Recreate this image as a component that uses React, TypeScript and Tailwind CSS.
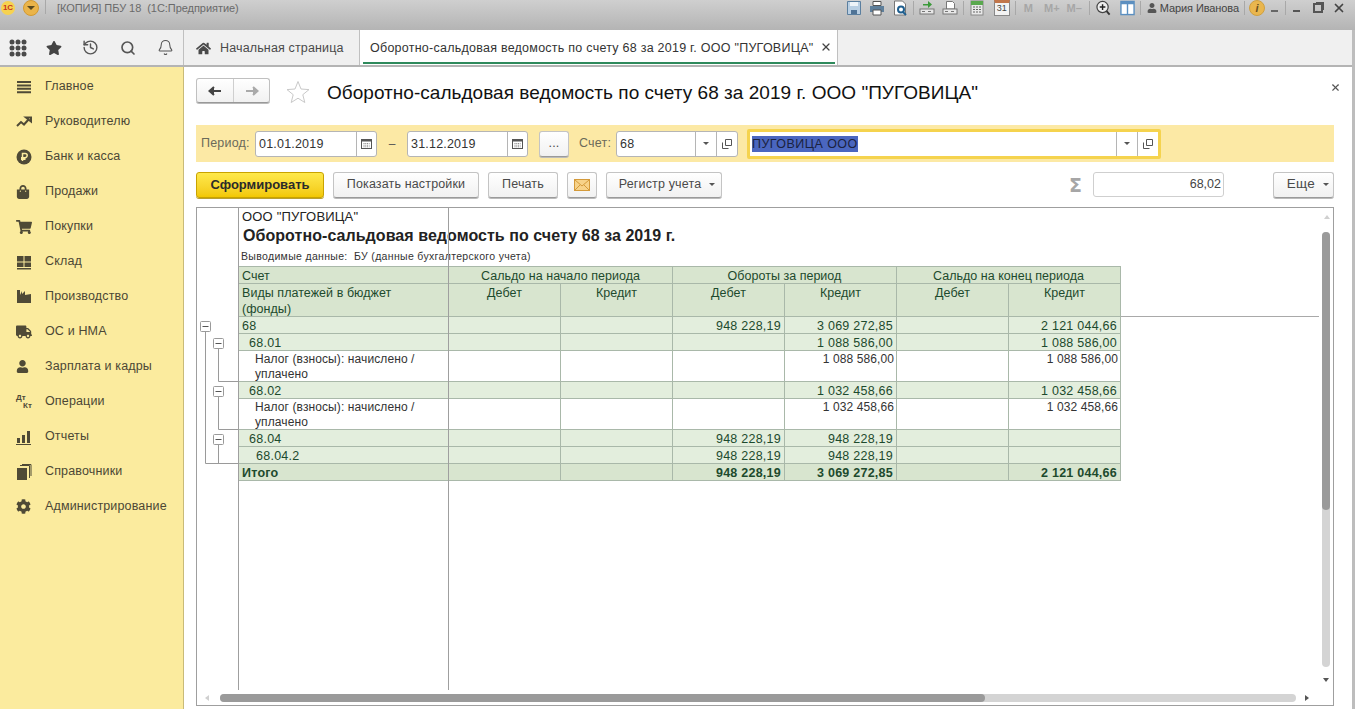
import React from "react";
import { FaStar, FaHome, FaShoppingCart, FaTruck, FaUser, FaCog, FaShoppingBag } from "react-icons/fa";
import { History, Search, Bell, X } from "lucide-react";

const Sv = ({ children, w = 16, h = 16, vb = "0 0 16 16" }: { children: React.ReactNode; w?: number; h?: number; vb?: string }) => (
  <svg width={w} height={h} viewBox={vb} className="shrink-0">{children}</svg>
);

const Dots = () => (
  <Sv w={18} h={18} vb="0 0 18 18">
    {[3, 9, 15].flatMap((y) => [3, 9, 15].map((x) => <circle key={`${x}-${y}`} cx={x} cy={y} r="2.5" fill="#4a4a4a" />))}
  </Sv>
);

const CopyIcon = () => (
  <Sv w={10} h={10} vb="0 0 10 10">
    <path d="M3.5 .5h6v6h-6z M.5 3.5v6h6" fill="none" stroke="#555" strokeWidth="1" />
  </Sv>
);
const Caret = () => <span className="block w-0 h-0 border-x-[3px] border-x-transparent border-t-[3px] border-t-[#555]" />;
const Cal = () => (
  <Sv w={11} h={11} vb="0 0 11 11">
    <rect x=".5" y="1.5" width="10" height="9" fill="#fff" stroke="#555" />
    <rect x="1" y="1" width="9" height="2.5" fill="#555" />
    <path d="M2.5 5.5h6M2.5 7.2h6M2.5 8.8h6" stroke="#777" strokeWidth=".9" strokeDasharray="1 .8" />
  </Sv>
);

const navIcons: React.ReactNode[] = [
  <Sv><path d="M1 3h14M1 6.4h14M1 9.8h14M1 13.2h14" stroke="#4f4a36" strokeWidth="2" /></Sv>,
  <Sv><path d="M1 12l4-4 3 2.5 5-5.5M10 3.5h5v4z" fill="none" stroke="#4f4a36" strokeWidth="2" /></Sv>,
  <Sv><circle cx="8" cy="8" r="7.5" fill="#4f4a36" /><path d="M6.5 12V4.500h2.600a2 2 0 010 4.200H5M5 10.300h4.500" fill="none" stroke="#fbeb9e" strokeWidth="1.500" /></Sv>,
  <FaShoppingBag size={14} color="#4f4a36" />,
  <FaShoppingCart size={16} color="#4f4a36" />,
  <Sv><path d="M1 2h6.500v5.500H1zM8.500 2H15v5.500H8.500zM1 8.500h6.500V13H1zM8.500 8.500H15V13H8.500zM1 14h14v1.500H1z" fill="#4f4a36" /></Sv>,
  <Sv><path d="M1 14V1h3v5l2-4v3l3-3v4l6-1v9z" fill="#4f4a36" /></Sv>,
  <FaTruck size={16} color="#4f4a36" />,
  <FaUser size={13} color="#4f4a36" />,
  <span className="relative block w-[16px] h-[16px] text-[#4f4a36] text-[8px] leading-[8px] font-bold"><span className="block">Дт</span><span className="block pl-[7px]">Кт</span></span>,
  <Sv><path d="M1 9h3v5H1zM6 6h3v8H6zM11 2h3v12h-3zM0 15h15v1H0z" fill="#4f4a36" /></Sv>,
  <Sv><path d="M1 4h10v12H1z" fill="#4f4a36" /><path d="M4 1.500h9.500V14M6 .5h9V12" fill="none" stroke="#4f4a36" /></Sv>,
  <FaCog size={15} color="#4f4a36" />,
];
const navLabels = ["Главное", "Руководителю", "Банк и касса", "Продажи", "Покупки", "Склад", "Производство", "ОС и НМА", "Зарплата и кадры", "Операции", "Отчеты", "Справочники", "Администрирование"];

const Btn = ({ className, children }: { className: string; children: React.ReactNode }) => (
  <div className={`h-[26px] flex items-center justify-center rounded-[3px] border border-[#c4c4c4] border-b-[#9a9a9a] bg-gradient-to-b from-white to-[#f1f1f1] text-[12.5px] text-[#4a4a4a] shadow-[0_1px_0_#bbb] tracking-[0.15px] ${className}`}>{children}</div>
);

const Field = ({ text, w, btns }: { text: string; w: string; btns: React.ReactNode }) => (
  <div className={`h-[26px] flex items-stretch rounded-[3px] border border-[#b5b5b5] bg-white ${w}`}>
    <span className="flex-1 pl-[3px] text-[12.5px] leading-[24px] text-[#333] tracking-[0.2px]">{text}</span>
    {btns}
  </div>
);
const CalBtn = () => (
  <span className="w-[20px] border-l border-[#b5b5b5] flex items-center justify-center"><Cal /></span>
);
const SelBtns = () => (
  <>
    <span className="w-[21px] border-l border-[#b5b5b5] flex items-center justify-center"><Caret /></span>
    <span className="w-[21px] border-l border-[#b5b5b5] flex items-center justify-center"><CopyIcon /></span>
  </>
);

type Row = { h: string; bg: string; name: string; pad: string; v: string[]; small?: boolean; bold?: boolean };
const green = "bg-[#e3eedd]";
const rows: Row[] = [
  { h: "h-[17px]", bg: green, name: "68", pad: "pl-[3px]", v: ["", "", "948 228,19", "3 069 272,85", "", "2 121 044,66"] },
  { h: "h-[17px]", bg: green, name: "68.01", pad: "pl-[10px]", v: ["", "", "", "1 088 586,00", "", "1 088 586,00"] },
  { h: "h-[31px]", bg: "bg-white", name: "Налог (взносы): начислено / уплачено", pad: "pl-[16px]", small: true, v: ["", "", "", "1 088 586,00", "", "1 088 586,00"] },
  { h: "h-[17px]", bg: green, name: "68.02", pad: "pl-[10px]", v: ["", "", "", "1 032 458,66", "", "1 032 458,66"] },
  { h: "h-[31px]", bg: "bg-white", name: "Налог (взносы): начислено / уплачено", pad: "pl-[16px]", small: true, v: ["", "", "", "1 032 458,66", "", "1 032 458,66"] },
  { h: "h-[17px]", bg: green, name: "68.04", pad: "pl-[10px]", v: ["", "", "948 228,19", "948 228,19", "", ""] },
  { h: "h-[17px]", bg: green, name: "68.04.2", pad: "pl-[17px]", v: ["", "", "948 228,19", "948 228,19", "", ""] },
  { h: "h-[17px]", bg: "bg-[#d8e5cf]", name: "Итого", pad: "pl-[3px]", bold: true, v: ["", "", "948 228,19", "3 069 272,85", "", "2 121 044,66"] },
];

const cell = "border border-[#a9b8a9] p-0 align-top overflow-hidden";
const Nudge = ({ children }: { children: React.ReactNode }) => <span className="relative top-[1px] block">{children}</span>;

const TreeBox = ({ x, y }: { x: number; y: number }) => (
  <g>
    <rect x={x} y={y} width="10" height="10" rx="1" fill="#fff" stroke="#9a9a9a" />
    <path d={`M${x + 2} ${y + 5}h6`} stroke="#555" />
  </g>
);

const Sep = ({ c }: { c: string }) => <div className={`w-px h-[14px] bg-[#a8a8a8] ${c}`} />;

export default function App() {
  return (
    <div className="w-[1355px] h-[709px] overflow-hidden flex flex-col bg-[#bdbdbd] text-[#333]" style={{ fontFamily: '"Liberation Sans", Arial, sans-serif' }}>
      {/* title bar */}
      <div className="h-[30px] shrink-0 flex items-start bg-gradient-to-b from-[#cfcfcf] to-[#b4b4b4]">
        <div className="w-[14px] h-[14px] ml-[1px] mt-[1px] rounded-full bg-[#f6d250] flex items-center justify-center text-[8px] font-bold text-[#c8321e]">1С</div>
        <div className="w-[16px] h-[16px] ml-[8px] rounded-full bg-[#eab44a] border border-[#d39a30] flex items-center justify-center">
          <span className="block w-0 h-0 border-x-[4px] border-x-transparent border-t-[4px] border-t-[#5a4a20]" />
        </div>
        <div className="w-px h-[14px] ml-[6px] bg-[#a8a8a8]" />
        <div className="ml-[11px] h-[16px] text-[11px] leading-[16px] tracking-[-0.05px] text-[#6a6a6a] whitespace-nowrap">[КОПИЯ] ПБУ 18&nbsp; (1С:Предприятие)</div>
        <div className="ml-auto mr-[9px] flex items-center h-[16px]">
          <div className="flex items-center gap-[7px]">
            <Sv><path d="M1.500 1.500h13v13h-13z" fill="#b9cfe3" stroke="#5b7f9f" /><path d="M4 2h8v4H4z" fill="#eef4f9" /><path d="M5 10h6v4H5z" fill="#4f7396" /></Sv>
            <Sv><path d="M4 1.500h8v4H4z" fill="#fff" stroke="#555" /><path d="M1 6h14v6H1z" fill="#5e7f9b" /><path d="M4 10h8v5H4z" fill="#fff" stroke="#555" /></Sv>
            <Sv><path d="M2.500 1h8l3 3v11h-11z" fill="#fff" stroke="#777" /><circle cx="9" cy="9.500" r="3" fill="none" stroke="#1f5f8f" strokeWidth="2" /><path d="M11 12l3 3" stroke="#1f5f8f" strokeWidth="2" /></Sv>
          </div>
          <Sep c="mx-[5px]" />
          <div className="flex items-center gap-[7px]">
            <Sv><path d="M4 4h5V1l4 3.500L9 8V5.500H4z" fill="#3b9a3a" /><rect x="1" y="9" width="14" height="5" fill="#e8e8e8" stroke="#777" /><path d="M3 11.500h3M9 11.500h3" stroke="#777" /></Sv>
            <Sv><path d="M4.500 1.500h6l2 2V9h-8z" fill="#fff" stroke="#777" /><rect x="1" y="9" width="14" height="5" fill="#e8e8e8" stroke="#777" /><path d="M3 11.500h3M9 11.500h3" stroke="#777" /></Sv>
          </div>
          <Sep c="mx-[5px]" />
          <div className="flex items-center gap-[9px]">
            <Sv><rect x="2" y="1" width="12" height="14" fill="#e9e9e9" stroke="#888" /><rect x="2" y="1" width="12" height="4" fill="#5aa84f" /><path d="M4 7h2M7 7h2M10 7h2M4 9.500h2M7 9.500h2M10 9.500h2M4 12h2M7 12h2M10 12h2" stroke="#666" strokeWidth="1.200" /></Sv>
            <div className="w-[16px] h-[16px] border border-[#888] bg-[#f3f3f3] border-t-[3px] border-t-[#c2764a] text-[9px] leading-[11px] text-center text-[#444]">31</div>
          </div>
          <Sep c="mx-[5px]" />
          <div className="flex items-center text-[11px] font-bold text-[#a6a6a6]">
            <span className="ml-[3px]">M</span><span className="ml-[11px]">M+</span><span className="ml-[7px]">M–</span>
          </div>
          <Sep c="ml-[7px] mr-[6px]" />
          <Sv w={15} h={16}>
            <circle cx="7" cy="7" r="6" fill="#eee" stroke="#444" strokeWidth="1.300" />
            <path d="M4 7h6M7 4v6" stroke="#222" strokeWidth="1.500" />
            <path d="M11.300 11.300l3.200 3.700" stroke="#333" strokeWidth="2" />
          </Sv>
          <span className="ml-[9px] flex"><Sv w={15} h={16}><rect x="1" y="1" width="14" height="14" fill="#fff" stroke="#5b8fc0" strokeWidth="1.500" /><rect x="1" y="1" width="14" height="3" fill="#5b8fc0" /><path d="M8 1v14" stroke="#5b8fc0" strokeWidth="1.500" /></Sv></span>
          <Sep c="ml-[5px] mr-[6px]" />
          <FaUser size={10} color="#555" />
          <span className="ml-[3px] text-[11px] tracking-[-0.1px] text-[#444] leading-[16px] whitespace-nowrap">Мария Иванова</span>
          <Sep c="ml-[5px] mr-[4px]" />
          <span className="w-[16px] h-[16px] rounded-full bg-[#e9b64e] border border-[#cfa040] text-center text-[11px] leading-[14px] font-bold italic text-[#6a5020]">i</span>
          <span className="ml-[6px] mt-[6px] block w-[7px] h-[2px] bg-[#666]" />
          <Sep c="ml-[7px] mr-[7px]" />
          <span className="mt-[6px] block w-[7px] h-[2px] bg-[#555]" />
          <span className="ml-[13px] block w-[10px] h-[10px] border-2 border-[#555] shadow-[2px_-2px_0_-1px_#555]" />
          <X size={14} color="#444" strokeWidth={3} className="ml-[9px]" />
        </div>
      </div>

      {/* window body */}
      <div className="flex-1 min-h-0 mr-[3px] flex flex-col bg-white">
        <div className="h-[37px] shrink-0 flex bg-[#f0f0f0] border-b-2 border-[#b4b4b4]">
          <div className="w-[184px] shrink-0 border-r border-[#c0c0c0] flex items-center pl-[9px] text-[#4a4a4a]">
            <Dots />
            <FaStar size={16} className="ml-[19px]" color="#444" />
            <History size={17} className="ml-[20px]" color="#555" strokeWidth={2} />
            <Search size={16} className="ml-[21px]" color="#555" strokeWidth={2.5} />
            <Bell size={17} className="ml-[21px]" color="#555" strokeWidth={1.5} />
          </div>
          <div className="w-[176px] shrink-0 border-r border-[#c0c0c0] flex items-center pl-[12px] pt-[1px]">
            <FaHome size={15} color="#4a4a4a" />
            <span className="ml-[9px] text-[12.5px] text-[#4a4a4a] tracking-[0.15px]">Начальная страница</span>
          </div>
          <div className="w-[478px] shrink-0 bg-white border-r border-[#c0c0c0] relative flex items-center pl-[10px] pt-[1px]">
            <span className="text-[12.5px] text-[#333] tracking-[0.25px] whitespace-nowrap">Оборотно-сальдовая ведомость по счету 68 за 2019 г. ООО "ПУГОВИЦА"</span>
            <X size={12} color="#444" strokeWidth={2.5} className="absolute right-[5px] top-[11px]" />
            <span className="absolute left-[3px] right-[2px] bottom-[1px] h-[2px] bg-[#2f8a5c]" />
          </div>
        </div>

        <div className="flex-1 min-h-0 flex">
          {/* sidebar */}
          <div className="w-[184px] shrink-0 bg-[#fbeb9e] border-r border-[#c9bb78] pt-[2px]">
            {navLabels.map((l, i) => (
              <div key={l} className="h-[35px] flex items-center">
                <span className="w-[45px] pl-[16px] shrink-0 flex items-center">{navIcons[i]}</span>
                <span className="text-[12.5px] text-[#4b4735] tracking-[0.15px] whitespace-nowrap">{l}</span>
              </div>
            ))}
          </div>

          {/* main */}
          <div className="flex-1 min-w-0 pl-[12px] pr-[18px] flex flex-col">
            <div className="h-[58px] shrink-0 flex items-start pt-[11px] relative">
              <div className="w-[74px] h-[25px] flex rounded-[3px] border border-[#c0c0c0] border-b-[#999] bg-gradient-to-b from-white to-[#f1f1f1] shadow-[0_1px_0_#bbb]">
                <span className="flex-1 flex items-center justify-center border-r border-[#cfcfcf]">
                  <Sv w={14} h={10} vb="0 0 14 10"><path d="M13 5H3M6 1L1.500 5 6 9" fill="#444" stroke="#444" strokeWidth="2" /></Sv>
                </span>
                <span className="w-[35px] flex items-center justify-center">
                  <Sv w={14} h={10} vb="0 0 14 10"><path d="M1 5h10M8 1l4.500 4L8 9" fill="#aaa" stroke="#aaa" strokeWidth="2" /></Sv>
                </span>
              </div>
              <span className="ml-[16px] mt-[2px] flex">
                <Sv w={24} h={24} vb="0 0 24 24"><path d="M12 1.500l3 7.500 8 .6-6.200 5.100 2 7.800-6.800-4.300-6.800 4.300 2-7.800L1 9.600l8-.6z" fill="#fff" stroke="#c9c9c9" /></Sv>
              </span>
              <span className="ml-[17px] mt-[2px] text-[19px] tracking-[0.03px] leading-[26px] text-[#111] whitespace-nowrap">Оборотно-сальдовая ведомость по счету 68 за 2019 г. ООО "ПУГОВИЦА"</span>
              <X size={11} color="#555" strokeWidth={2.5} className="absolute right-[-7px] top-[15px]" />
            </div>

            <div className="h-[37px] shrink-0 bg-[#fce9a5] flex items-center pl-[5px]">
              <span className="text-[12.5px] text-[#6b6b5a] tracking-[0.2px] w-[54px]">Период:</span>
              <Field text="01.01.2019" w="w-[122px]" btns={<CalBtn />} />
              <span className="w-[30px] text-center text-[#555] text-[12px]">–</span>
              <Field text="31.12.2019" w="w-[121px]" btns={<CalBtn />} />
              <Btn className="w-[30px] ml-[11px] text-[11px]">...</Btn>
              <span className="ml-[10px] w-[37px] text-[12.5px] text-[#6b6b5a] tracking-[0.2px]">Счет:</span>
              <Field text="68" w="w-[122px]" btns={<SelBtns />} />
              <div className="ml-[9px] w-[414px] h-[30px] flex items-stretch rounded-[2px] border-[3px] border-[#f5d34e] bg-white">
                <span className="flex-1 pl-[2px] flex items-center">
                  <span className="bg-[#4a66bf] text-[#1a2240] text-[12.5px] leading-[16px] tracking-[0.45px]">ПУГОВИЦА ООО</span>
                </span>
                <SelBtns />
              </div>
            </div>

            <div className="h-[45px] shrink-0 flex items-center">
              <div className="w-[128px] h-[26px] flex items-center justify-center rounded-[3px] border border-[#c9a300] bg-gradient-to-b from-[#fee94a] to-[#f2c800] shadow-[0_1px_0_#b9a030] text-[13px] font-bold text-[#2a2a2a]">Сформировать</div>
              <Btn className="w-[146px] ml-[9px]">Показать настройки</Btn>
              <Btn className="w-[70px] ml-[9px]">Печать</Btn>
              <Btn className="w-[30px] ml-[9px]">
                <Sv w={16} h={12} vb="0 0 16 12"><rect x=".5" y=".5" width="15" height="11" fill="#f7d38a" stroke="#d49a3a" /><path d="M1 1l7 6 7-6M1 11l5-5M15 11l-5-5" fill="none" stroke="#d49a3a" /></Sv>
              </Btn>
              <Btn className="w-[116px] ml-[9px] gap-[8px] pl-[6px]">Регистр учета <Caret /></Btn>
              <span className="ml-auto mr-[11px] text-[19px] leading-[20px] font-bold text-[#a6a6a6] font-['DejaVu_Sans']">Σ</span>
              <div className="w-[131px] h-[25px] rounded-[3px] border border-[#cfcfcf] bg-white text-right pr-[2px] text-[12.5px] leading-[23px] text-[#444]">68,02</div>
              <Btn className="w-[61px] ml-[49px] gap-[8px] pl-[9px]"><span className="text-[13.5px] tracking-[0.3px]">Еще</span> <Caret /></Btn>
            </div>

            {/* report */}
            <div className="relative h-[499px] shrink-0 border border-[#9f9f9f] bg-white overflow-hidden">
              <div className="pl-[41px]">
                <div className="h-[58px] pl-[4px]">
                  <div className="text-[13px] leading-[15px] tracking-[0.2px] text-[#222] pt-[1px] box-content">ООО "ПУГОВИЦА"</div>
                  <div className="text-[16px] leading-[20px] font-bold text-[#222] pt-[2px] box-content tracking-[0.06px] ml-[1px] whitespace-nowrap">Оборотно-сальдовая ведомость по счету 68 за 2019 г.</div>
                  <div className="text-[10.5px] leading-[14px] pt-[3px] box-content text-[#333] -ml-[1px] tracking-[0.33px] whitespace-nowrap">Выводимые данные:&nbsp; БУ (данные бухгалтерского учета)</div>
                </div>
                <table className="table-fixed border-collapse w-[882px] text-[12.5px] leading-[16px] text-[#1d4a2d] tracking-[0.25px]">
                  <colgroup>
                    <col className="w-[210px]" />
                    {[0, 1, 2, 3, 4, 5].map((i) => <col key={i} className="w-[112px]" />)}
                  </colgroup>
                  <tbody>
                    <tr className="h-[17px] bg-[#d8e5cf] tracking-[0.02px]">
                      <td className={`${cell} pl-[3px]`}><Nudge>Счет</Nudge></td>
                      <td colSpan={2} className={`${cell} text-center`}><Nudge>Сальдо на начало периода</Nudge></td>
                      <td colSpan={2} className={`${cell} text-center`}><Nudge>Обороты за период</Nudge></td>
                      <td colSpan={2} className={`${cell} text-center`}><Nudge>Сальдо на конец периода</Nudge></td>
                    </tr>
                    <tr className="h-[33px] bg-[#d8e5cf] tracking-[0.05px]">
                      <td className={`${cell} pl-[3px] pr-[30px]`}><Nudge>Виды платежей в бюджет (фонды)</Nudge></td>
                      {["Дебет", "Кредит", "Дебет", "Кредит", "Дебет", "Кредит"].map((t, i) => (
                        <td key={i} className={`${cell} text-center`}><Nudge>{t}</Nudge></td>
                      ))}
                    </tr>
                    {rows.map((r, i) => (
                      <tr key={i} className={`${r.h} ${r.bg} ${r.bold ? "font-bold" : ""}`}>
                        <td className={`${cell} ${r.pad} ${r.small ? "text-[12px] text-[#333] leading-[15px] tracking-[0.1px] pr-[20px]" : ""}`}><Nudge>{r.name}</Nudge></td>
                        {r.v.map((v, j) => (
                          <td key={j} className={`${cell} text-right whitespace-nowrap ${r.small ? "pr-[2px] text-[12px] leading-[15px] text-[#333] tracking-[0.1px]" : "pr-[3px]"}`}><Nudge>{v}</Nudge></td>
                        ))}
                      </tr>
                    ))}
                  </tbody>
                </table>
              </div>

              {/* frozen-area separators */}
              <div className="absolute left-[41px] top-0 h-[482px] w-px bg-[#9f9f9f]" />
              <div className="absolute left-[251px] top-0 h-[482px] w-px bg-[#9f9f9f]" />
              <div className="absolute left-[924px] w-[198px] top-[108px] h-px bg-[#a9a9a9]" />

              {/* tree outline */}
              <svg width="42" height="290" className="absolute left-0 top-0">
                <g fill="none" stroke="#9a9a9a">
                  <path d="M8.500 123V255.500H41" />
                  <path d="M21.500 140V173.500H41" />
                  <path d="M21.500 188V221.500H41" />
                  <path d="M21.500 236V255" />
                </g>
                <TreeBox x={3.5} y={113.5} />
                <TreeBox x={16.5} y={130.5} />
                <TreeBox x={16.5} y={178.5} />
                <TreeBox x={16.5} y={226.5} />
              </svg>

              {/* scrollbars */}
              <div className="absolute left-[1125px] top-[24px] w-[8px] h-[435px] rounded-[4px] bg-[#d4d4d4]">
                <div className="w-[8px] h-[278px] rounded-[4px] bg-[#9a9a9a]" />
              </div>
              <div className="absolute left-[23px] top-[486px] h-[8px] w-[1076px] rounded-[4px] bg-[#d4d4d4]">
                <div className="h-[8px] w-[765px] rounded-[4px] bg-[#9a9a9a]" />
              </div>
              <span className="absolute left-[1127px] top-[7px] w-0 h-0 border-x-[3px] border-x-transparent border-b-[4px] border-b-[#d0d0d0]" />
              <span className="absolute left-[1126px] top-[470px] w-0 h-0 border-x-[3px] border-x-transparent border-t-[4px] border-t-[#555]" />
              <span className="absolute left-[8px] top-[487px] w-0 h-0 border-y-[3px] border-y-transparent border-r-[4px] border-r-[#d0d0d0]" />
              <span className="absolute left-[1108px] top-[487px] w-0 h-0 border-y-[3px] border-y-transparent border-l-[4px] border-l-[#555]" />
            </div>
          </div>
        </div>
      </div>
    </div>
  );
}
